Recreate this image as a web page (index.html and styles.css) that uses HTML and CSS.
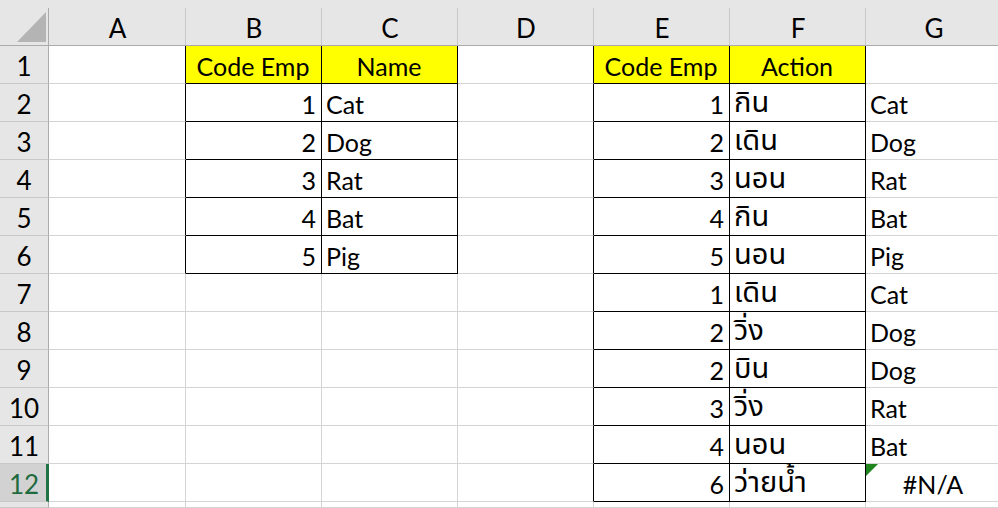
FILE: index.html
```html
<!DOCTYPE html>
<html lang="th">
<head>
<meta charset="utf-8">
<title>Sheet</title>
<link rel="stylesheet" href="styles.css">
</head>
<body>
<div class="sheet">
  <div class="corner"><svg width="49" height="46" viewBox="0 0 49 46"><polygon points="17,42 46,42 46,12" fill="#b4b4b4"/></svg></div>
  <div class="ch">A</div><div class="ch">B</div><div class="ch">C</div><div class="ch">D</div><div class="ch">E</div><div class="ch">F</div><div class="ch">G</div>

  <div class="rh">1</div>
  <div class="c kr"></div><div class="c y ctr kr kb">Code Emp</div><div class="c y ctr kr kb">Name</div><div class="c kr"></div><div class="c y ctr kr kb">Code Emp</div><div class="c y ctr kr kb">Action</div><div class="c"></div>

  <div class="rh">2</div>
  <div class="c kr"></div><div class="c r kr kb">1</div><div class="c kr kb">Cat</div><div class="c kr"></div><div class="c r kr kb">1</div><div class="c th kr kb">กิน</div><div class="c">Cat</div>

  <div class="rh">3</div>
  <div class="c kr"></div><div class="c r kr kb">2</div><div class="c kr kb">Dog</div><div class="c kr"></div><div class="c r kr kb">2</div><div class="c th kr kb">เดิน</div><div class="c">Dog</div>

  <div class="rh">4</div>
  <div class="c kr"></div><div class="c r kr kb">3</div><div class="c kr kb">Rat</div><div class="c kr"></div><div class="c r kr kb">3</div><div class="c th kr kb">นอน</div><div class="c">Rat</div>

  <div class="rh">5</div>
  <div class="c kr"></div><div class="c r kr kb">4</div><div class="c kr kb">Bat</div><div class="c kr"></div><div class="c r kr kb">4</div><div class="c th kr kb">กิน</div><div class="c">Bat</div>

  <div class="rh">6</div>
  <div class="c kr"></div><div class="c r kr kb">5</div><div class="c kr kb">Pig</div><div class="c kr"></div><div class="c r kr kb">5</div><div class="c th kr kb">นอน</div><div class="c">Pig</div>

  <div class="rh">7</div>
  <div class="c"></div><div class="c"></div><div class="c"></div><div class="c kr"></div><div class="c r kr kb">1</div><div class="c th kr kb">เดิน</div><div class="c">Cat</div>

  <div class="rh">8</div>
  <div class="c"></div><div class="c"></div><div class="c"></div><div class="c kr"></div><div class="c r kr kb">2</div><div class="c th kr kb">วิ่ง</div><div class="c">Dog</div>

  <div class="rh">9</div>
  <div class="c"></div><div class="c"></div><div class="c"></div><div class="c kr"></div><div class="c r kr kb">2</div><div class="c th kr kb">บิน</div><div class="c">Dog</div>

  <div class="rh">10</div>
  <div class="c"></div><div class="c"></div><div class="c"></div><div class="c kr"></div><div class="c r kr kb">3</div><div class="c th kr kb">วิ่ง</div><div class="c">Rat</div>

  <div class="rh">11</div>
  <div class="c"></div><div class="c"></div><div class="c"></div><div class="c kr"></div><div class="c r kr kb">4</div><div class="c th kr kb">นอน</div><div class="c">Bat</div>

  <div class="rh sel">12</div>
  <div class="c"></div><div class="c"></div><div class="c"></div><div class="c kr"></div><div class="c r kr kb">6</div><div class="c th kr kb">ว่ายน้ำ</div><div class="c ctr err">#N/A</div>

  <div class="rh"></div>
  <div class="c"></div><div class="c"></div><div class="c"></div><div class="c"></div><div class="c"></div><div class="c"></div><div class="c"></div>
</div>
</body>
</html>
```

FILE: styles.css
```css
html, body {
  margin: 0;
  padding: 0;
  background: #ffffff;
  overflow: hidden;
}

.sheet {
  display: grid;
  grid-template-columns: 49px 137px repeat(6, 136px);
  grid-template-rows: 46px repeat(12, 38px) 6px;
  font-family: Lato, "Noto Sans Thai", "Noto Sans", sans-serif;
  font-size: 25px;
  color: #000;
  width: 1002px;
  height: 508px;
  overflow: hidden;
}

.corner {
  background: #e6e6e6;
  border-bottom: 1px solid #ababab;
  box-sizing: border-box;
  background-image: linear-gradient(to left, #ababab 1px, transparent 1px);
  background-repeat: no-repeat;
  background-size: 100% calc(100% - 8px);
  background-position: bottom;
}

.corner svg {
  display: block;
}

.ch {
  background-color: #e6e6e6;
  background-image: linear-gradient(to left, #c8c8c8 1px, transparent 1px);
  background-repeat: no-repeat;
  background-size: 100% calc(100% - 8px);
  background-position: bottom;
  border-bottom: 1px solid #ababab;
  box-sizing: border-box;
  display: flex;
  align-items: center;
  justify-content: center;
  padding-top: 10px;
  font-size: 26px;
}

.rh {
  background: #e6e6e6;
  border-right: 1px solid #ababab;
  border-bottom: 1px solid #c8c8c8;
  box-sizing: border-box;
  display: flex;
  align-items: center;
  justify-content: center;
  font-size: 26px;
  padding-top: 2px;
}

.rh.sel {
  background: #d2d2d2;
  color: #1e6b40;
  border-right: 3px solid #217346;
  padding-left: 2px;
}

.c {
  border-right: 1px solid #d4d4d4;
  border-bottom: 1px solid #d4d4d4;
  box-sizing: border-box;
  display: flex;
  align-items: center;
  padding: 2px 5px 0 4px;
  white-space: nowrap;
  overflow: hidden;
}

.y {
  background: #ffff00;
}

.ctr {
  justify-content: center;
}

.r {
  justify-content: flex-end;
}

.kr {
  border-right-color: #000;
}

.kb {
  border-bottom-color: #000;
}

.th {
  font-size: 29px;
  padding-top: 0;
}

.err {
  position: relative;
}

.err::before {
  content: "";
  position: absolute;
  left: 0;
  top: 0;
  width: 0;
  height: 0;
  border-top: 12px solid #1f861f;
  border-right: 12px solid transparent;
}
```
